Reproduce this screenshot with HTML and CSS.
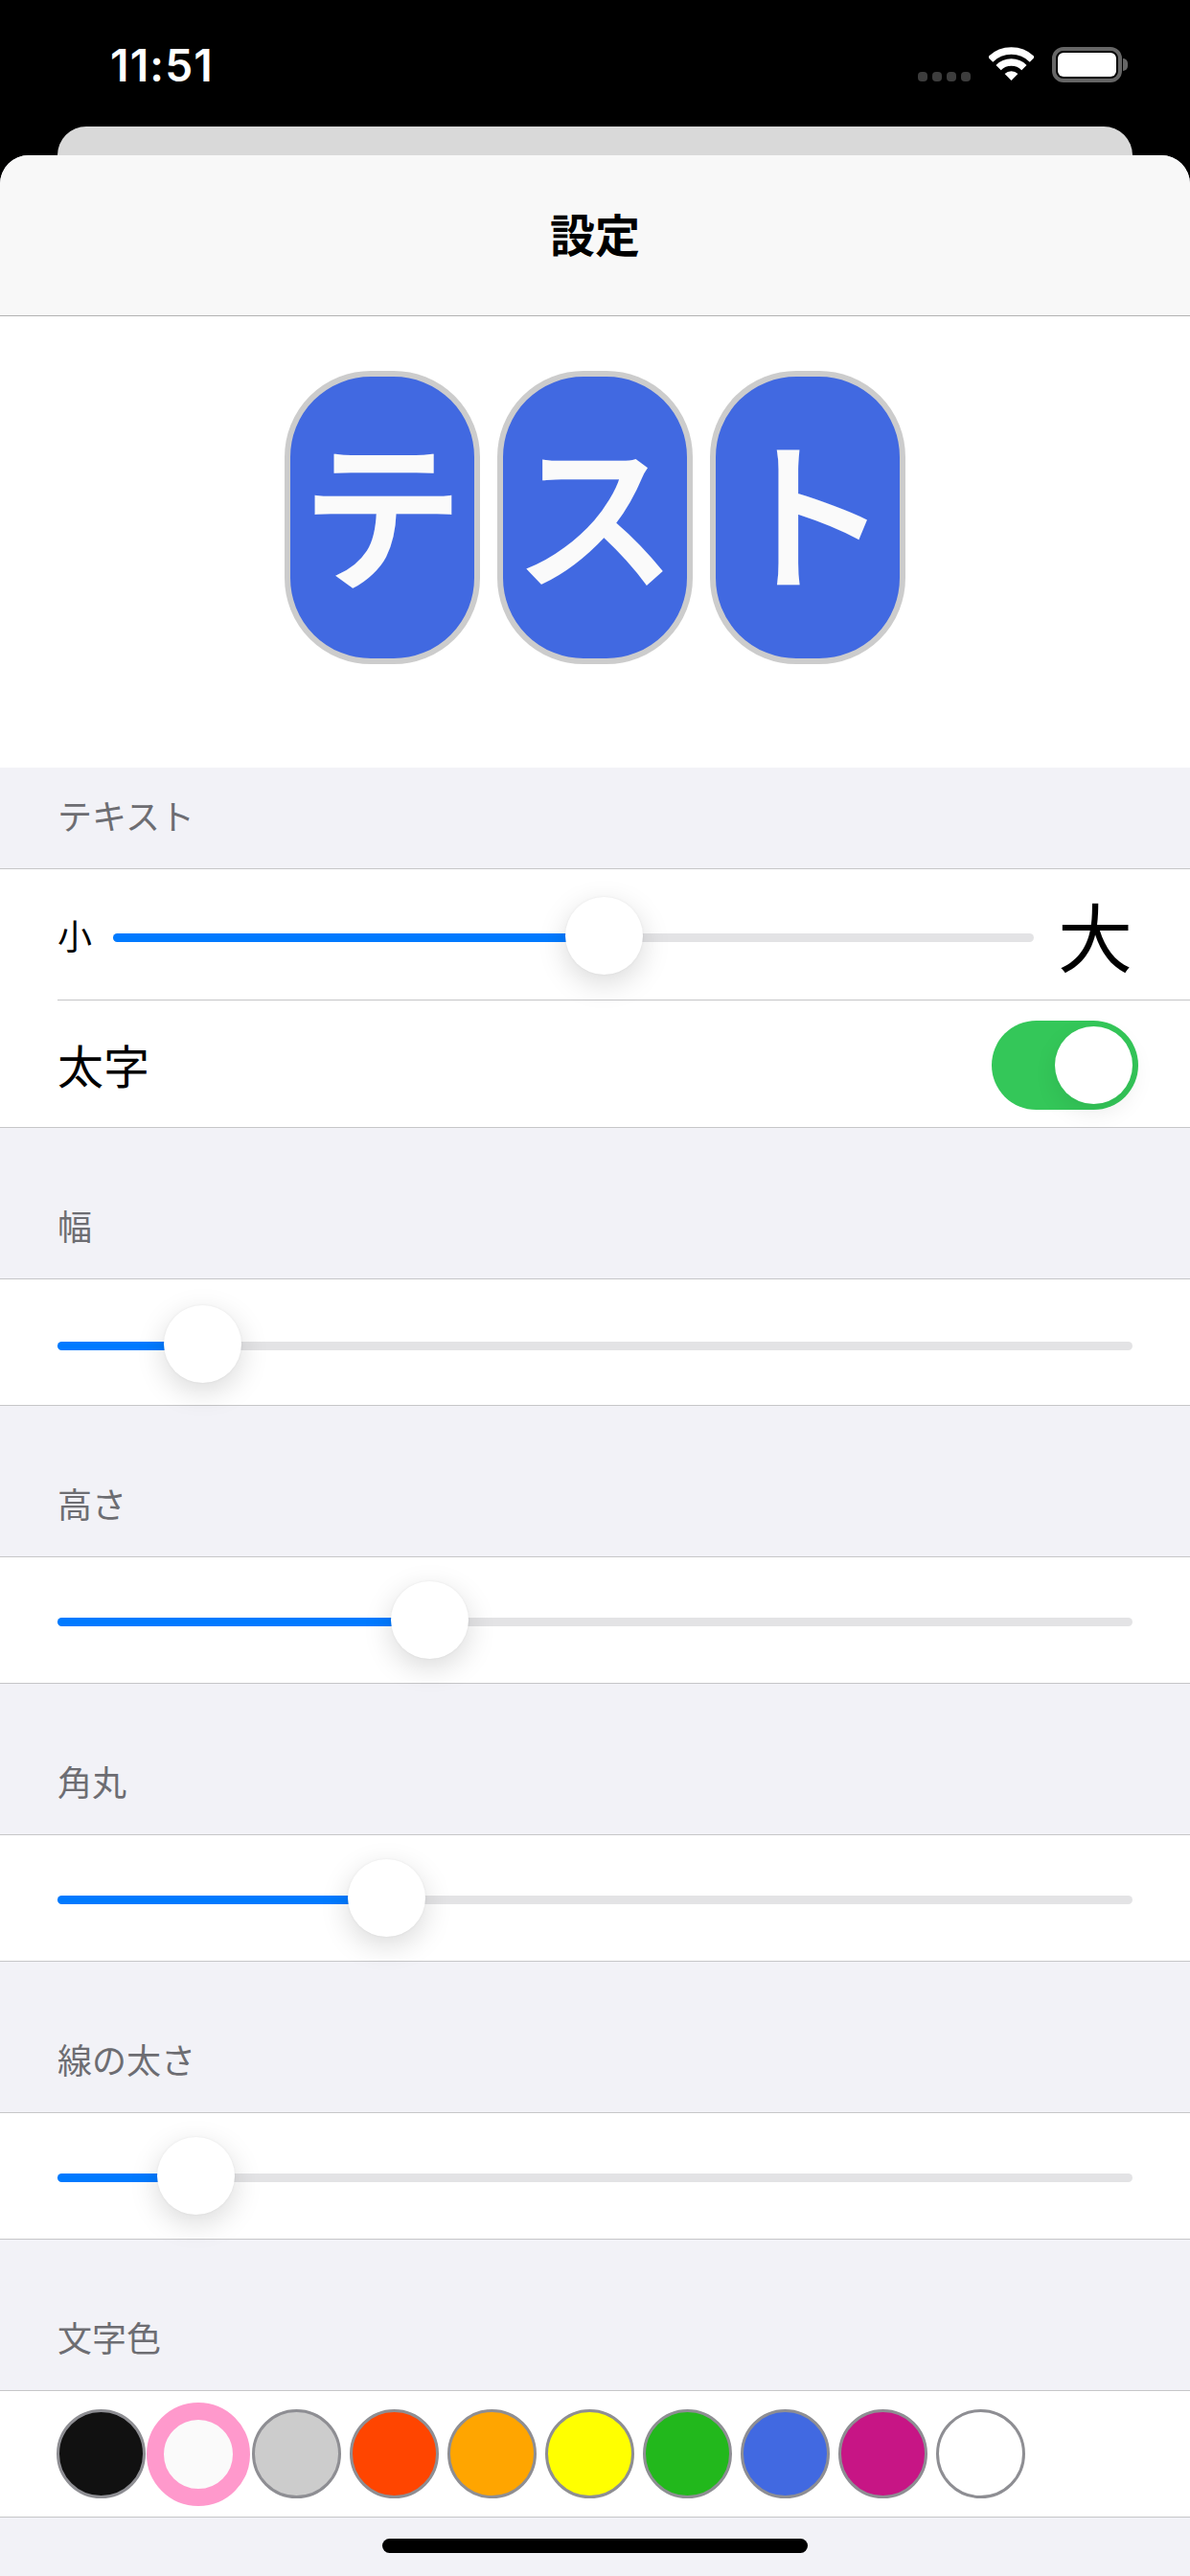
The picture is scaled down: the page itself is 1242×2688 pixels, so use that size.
FILE: index.html
```html
<!DOCTYPE html>
<html lang="ja">
<head>
<meta charset="utf-8">
<title>設定</title>
<link rel="stylesheet" href="styles.css">
</head>
<body>
<div class="statusbar">
  <span class="time">11:51</span>
  <div class="status-icons">
    <div class="signal"><i></i><i></i><i></i><i></i></div>
    <svg class="wifi" viewBox="0 0 47 35" width="47" height="35" aria-hidden="true">
      <path d="M1.6 13.1A31 31 0 0 1 45.4 13.1" fill="none" stroke="#fff" stroke-width="7.5"/>
      <path d="M10.1 21.6A19 19 0 0 1 36.9 21.6" fill="none" stroke="#fff" stroke-width="7.5"/>
      <path d="M23.5 35L16.6 28.1A9.7 9.7 0 0 1 30.4 28.1Z" fill="#fff"/>
    </svg>
    <div class="battery"><div class="battery-level"></div></div>
  </div>
</div>
<div class="back-sheet"></div>
<main class="sheet">
  <header class="nav"><h1>設定</h1></header>
  <section class="preview">
    <div class="pill">テ</div>
    <div class="pill">ス</div>
    <div class="pill">ト</div>
  </section>
  <div class="section-head first">テキスト</div>
  <div class="group">
    <div class="row text-size">
      <span class="small">小</span>
      <div class="track"><div class="fill" style="width:53.3%"><span class="thumb"></span></div></div>
      <span class="large">大</span>
    </div>
    <div class="row bold-row">
      <span class="label">太字</span>
      <div class="switch"><span class="knob"></span></div>
    </div>
  </div>
  <div class="section-head">幅</div>
  <div class="group"><div class="row lower"><div class="track"><div class="fill" style="width:13.5%"><span class="thumb"></span></div></div></div></div>
  <div class="section-head">高さ</div>
  <div class="group"><div class="row"><div class="track"><div class="fill" style="width:34.6%"><span class="thumb"></span></div></div></div></div>
  <div class="section-head">角丸</div>
  <div class="group"><div class="row"><div class="track"><div class="fill" style="width:30.6%"><span class="thumb"></span></div></div></div></div>
  <div class="section-head">線の太さ</div>
  <div class="group"><div class="row"><div class="track"><div class="fill" style="width:12.9%"><span class="thumb"></span></div></div></div></div>
  <div class="section-head">文字色</div>
  <div class="group">
    <div class="row swatches">
      <span class="swatch black"></span>
      <span class="swatch selected"></span>
      <span class="swatch gray"></span>
      <span class="swatch orangered"></span>
      <span class="swatch orange"></span>
      <span class="swatch yellow"></span>
      <span class="swatch green"></span>
      <span class="swatch blue"></span>
      <span class="swatch magenta"></span>
      <span class="swatch white"></span>
    </div>
  </div>
  <footer class="home"><span class="home-bar"></span></footer>
</main>
</body>
</html>
```
FILE: styles.css
```css
* { box-sizing: border-box; }
html, body { margin: 0; padding: 0; }
body {
  width: 1242px;
  height: 2688px;
  overflow: hidden;
  background: #000;
  display: flex;
  flex-direction: column;
  font-family: "Noto Sans CJK JP", "Noto Sans", sans-serif;
}

/* status bar */
.statusbar {
  height: 132px;
  flex: none;
  display: flex;
  justify-content: space-between;
  align-items: flex-start;
  padding: 39px 71px 0 115px;
  color: #fff;
}
.time {
  font-family: Inter, "Liberation Sans", sans-serif;
  font-weight: 600;
  font-size: 46px;
  line-height: 58px;
  letter-spacing: 1.2px;
}
.status-icons {
  display: flex;
  align-items: flex-start;
  padding-top: 10px;
}
.signal {
  display: flex;
  gap: 5px;
  margin: 26px 19px 0 0;
}
.signal i {
  width: 10px;
  height: 10px;
  border-radius: 4px;
  background: #3d3d3d;
}
.wifi { display: block; margin-right: 19px; }
.battery {
  position: relative;
  width: 73px;
  height: 37px;
  border: 4px solid #666;
  border-radius: 12px;
  padding: 2px;
}
.battery::after {
  content: "";
  position: absolute;
  right: -10px;
  top: 8px;
  width: 5px;
  height: 13px;
  background: #666;
  border-radius: 0 6px 6px 0;
}
.battery-level {
  height: 100%;
  background: #fff;
  border-radius: 6px;
}

.back-sheet {
  height: 30px;
  flex: none;
  margin: 0 60px;
  background: #d9d9d9;
  border-radius: 30px 30px 0 0;
}

.sheet {
  flex: 1;
  display: flex;
  flex-direction: column;
  background: #f2f2f7;
  border-radius: 30px 30px 0 0;
  overflow: hidden;
}
.nav {
  height: 168px;
  flex: none;
  background: #f8f8f8;
  border-bottom: 1px solid #b2b2b2;
  display: flex;
  align-items: center;
  justify-content: center;
  padding-bottom: 6px;
}
.nav h1 {
  margin: 0;
  font-size: 47px;
  line-height: 60px;
  font-weight: 700;
  color: #000;
}

.preview {
  height: 471px;
  flex: none;
  background: #fff;
  display: flex;
  justify-content: center;
  align-items: flex-start;
  gap: 18px;
  padding-top: 57px;
}
.pill {
  width: 204px;
  height: 306px;
  border: 6px solid #ccc;
  border-radius: 90px;
  background: #4169e1;
  color: #fafafa;
  font-size: 169px;
  font-weight: 500;
  -webkit-text-stroke: 2.5px #fafafa;
  line-height: 274px;
  text-align: center;
}

.section-head {
  height: 157px;
  flex: none;
  display: flex;
  align-items: flex-end;
  padding: 0 60px 35px;
  font-size: 36px;
  line-height: 42px;
  color: #6d6d72;
}
.section-head.first { height: 105px; }

.group {
  flex: none;
  background: #fff;
  border-top: 1px solid #c6c6c8;
  border-bottom: 1px solid #c6c6c8;
}
.row {
  height: 131px;
  display: flex;
  align-items: center;
  padding: 0 60px;
}
.row.lower { padding-top: 4px; }

.track {
  flex: 1;
  height: 9px;
  margin-top: 4px;
  border-radius: 5px;
  background: #e3e3e5;
}
.fill {
  position: relative;
  height: 100%;
  border-radius: 5px 0 0 5px;
  background: #007aff;
}
.thumb {
  position: absolute;
  right: -40.5px;
  top: -38px;
  width: 81px;
  height: 81px;
  border-radius: 50%;
  background: #fff;
  box-shadow: 0 9px 30px rgba(0, 0, 0, 0.15), 0 0 3px rgba(0, 0, 0, 0.06);
}

.text-size {
  height: 136px;
  padding-top: 3px;
}
.small {
  width: 58px;
  margin-top: -3px;
  font-size: 36px;
  line-height: 40px;
  color: #000;
}
.large {
  width: 103px;
  margin-top: -3px;
  text-align: right;
  font-size: 78px;
  line-height: 90px;
  color: #000;
}
.bold-row {
  height: 133px;
  justify-content: space-between;
  padding: 0 54px 0 0;
  border-top: 1px solid #c6c6c8;
  margin-left: 60px;
}
.label {
  font-size: 48px;
  line-height: 60px;
  color: #000;
}
.switch {
  width: 153px;
  height: 93px;
  margin-top: 3px;
  border-radius: 47px;
  background: #34c759;
  display: flex;
  justify-content: flex-end;
  align-items: center;
  padding-right: 6px;
}
.knob {
  width: 81px;
  height: 81px;
  border-radius: 50%;
  background: #fff;
  box-shadow: 0 9px 24px rgba(0, 0, 0, 0.08);
}

.swatches {
  gap: 9px;
  padding: 0 58.5px;
}
.swatch {
  flex: none;
  width: 93px;
  height: 93px;
  border-radius: 50%;
  border: 3px solid #8e8e93;
}
.black { background: #111; }
.gray { background: #ccc; }
.orangered { background: #ff4500; }
.orange { background: #ffa500; }
.yellow { background: #ff0; }
.green { background: #22b81c; }
.blue { background: #4169e1; }
.magenta { background: #c71585; }
.white { background: #fff; }
.selected {
  width: 108px;
  height: 108px;
  margin: 0 -7.5px;
  border: 18px solid #ff99cc;
  background: #fafafa;
}

.home {
  flex: 1;
  display: flex;
  justify-content: center;
  align-items: flex-start;
  padding-top: 22px;
}
.home-bar {
  width: 444px;
  height: 15px;
  border-radius: 8px;
  background: #000;
}
```
